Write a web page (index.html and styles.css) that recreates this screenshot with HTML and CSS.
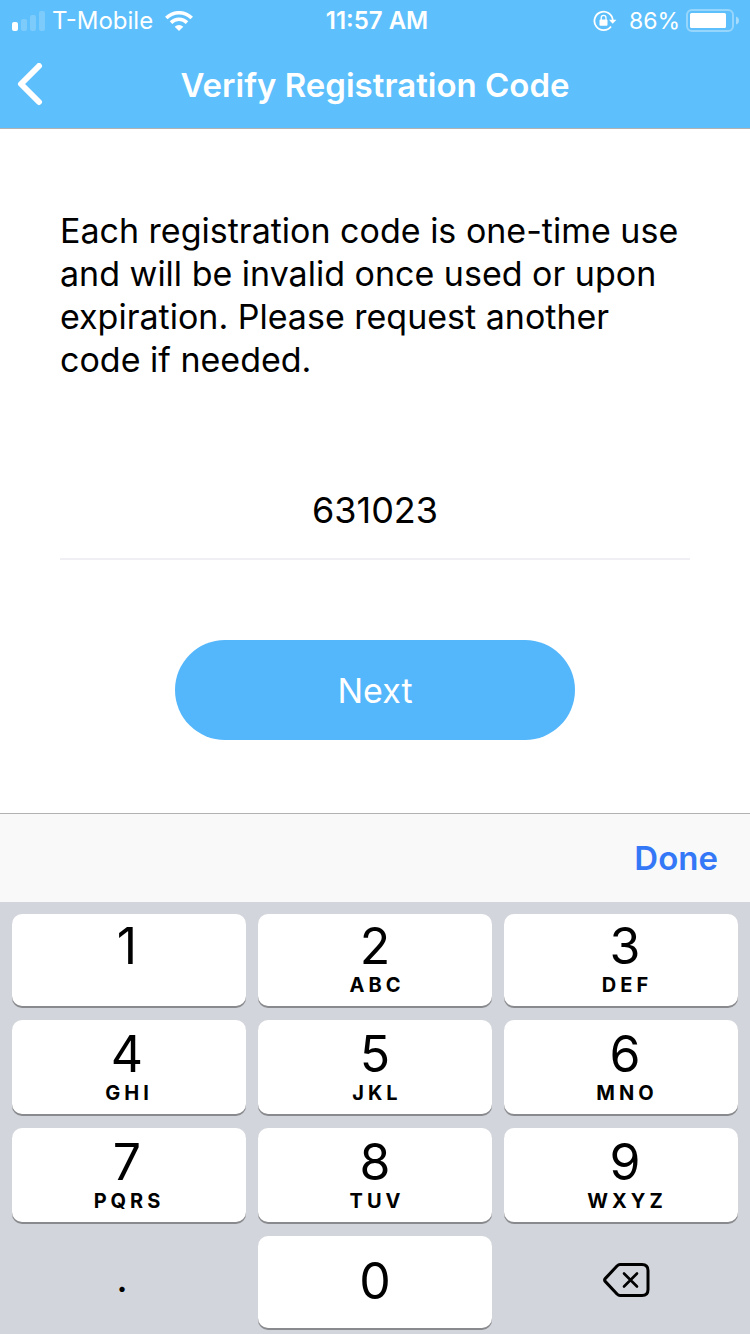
FILE: index.html
```html
<!DOCTYPE html>
<html lang="en">
<head>
<meta charset="utf-8">
<meta name="viewport" content="width=device-width, initial-scale=1">
<title>Verify Registration Code</title>
<link rel="stylesheet" href="styles.css">
</head>
<body>
<header class="header">
  <div class="status">
    <div class="status-left">
      <svg class="signal" width="34" height="20" viewBox="0 0 34 20" fill="#fff" aria-hidden="true">
        <rect x="0" y="11" width="6" height="9" rx="2"/>
        <g fill-opacity=".2">
          <rect x="9" y="8" width="6" height="12" rx="2"/>
          <rect x="18" y="4" width="6" height="16" rx="2"/>
          <rect x="27" y="0" width="6" height="20" rx="2"/>
        </g>
      </svg>
      <span>T-Mobile</span>
      <svg class="wifi" width="28" height="20" viewBox="0 0 28 20" aria-hidden="true">
        <path d="M1.300 7A18 18 0 0 1 26.700 7M6 11.600a11.400 11.400 0 0 1 16 0" fill="none" stroke="#fff" stroke-width="3.600"/>
        <path d="M14 20l-4.300-4.300a6.200 6.200 0 0 1 8.600 0z" fill="#fff"/>
      </svg>
    </div>
    <time class="clock">11:57 AM</time>
    <div class="status-right">
      <svg class="lock" width="24" height="22" viewBox="0 0 24 22" aria-hidden="true">
        <path d="M18 16.500A9.200 9.200 0 1 1 19.800 10" fill="none" stroke="#fff" stroke-width="1.800"/>
        <path d="M16 9.800h7.400L19.700 13.800z" fill="#fff"/>
        <rect x="6.500" y="9.400" width="8" height="6.400" rx="1" fill="#fff"/>
        <path d="M8.200 10V7.700a2.400 2.400 0 0 1 4.800 0V10" fill="none" stroke="#fff" stroke-width="1.300"/>
      </svg>
      <span class="percent">86%</span>
      <svg class="battery" width="54" height="24" viewBox="0 0 54 24" aria-hidden="true">
        <rect x="1" y="1" width="46" height="21" rx="5" fill="none" stroke="#fff" stroke-opacity=".36" stroke-width="2"/>
        <rect x="4" y="4" width="36" height="15" rx="1.500" fill="#fff"/>
        <path d="M50 7.500q3 1 3 4t-3 4z" fill="#fff" fill-opacity=".45"/>
      </svg>
    </div>
  </div>
  <nav class="nav">
    <button class="back" type="button" aria-label="Back">
      <svg width="26" height="44" viewBox="0 0 26 44" fill="none" stroke="#fff" stroke-width="6" stroke-linecap="round" stroke-linejoin="round" aria-hidden="true"><path d="M22 3L4 21l18 18"/></svg>
    </button>
    <h1 class="title">Verify Registration Code</h1>
  </nav>
</header>

<main class="content">
  <p class="notice">Each registration code is one-time use and will be invalid once used or upon expiration. Please request another code if needed.</p>
  <input class="code" type="text" inputmode="numeric" aria-label="Registration code" value="631023">
  <button class="next" type="button">Next</button>
</main>

<section class="keyboard" aria-label="Keypad">
  <div class="toolbar"><button class="done" type="button">Done</button></div>
  <div class="keys">
    <button class="key" type="button"><span class="digit">1</span></button>
    <button class="key" type="button"><span class="digit">2</span><span class="letters">ABC</span></button>
    <button class="key" type="button"><span class="digit">3</span><span class="letters">DEF</span></button>
    <button class="key" type="button"><span class="digit">4</span><span class="letters">GHI</span></button>
    <button class="key" type="button"><span class="digit">5</span><span class="letters">JKL</span></button>
    <button class="key" type="button"><span class="digit">6</span><span class="letters">MNO</span></button>
    <button class="key" type="button"><span class="digit">7</span><span class="letters">PQRS</span></button>
    <button class="key" type="button"><span class="digit">8</span><span class="letters">TUV</span></button>
    <button class="key" type="button"><span class="digit">9</span><span class="letters">WXYZ</span></button>
    <button class="key key-plain key-point" type="button">.</button>
    <button class="key key-zero" type="button"><span class="digit">0</span></button>
    <button class="key key-plain key-delete" type="button" aria-label="Delete">
      <svg width="48" height="36" viewBox="0 0 48 36" fill="none" stroke="#000" stroke-linecap="round" stroke-linejoin="round" aria-hidden="true">
        <path d="M18 2.500H40Q46 2.500 46 8.500V27.500Q46 33.500 40 33.500H18Q16.500 33.500 15 32L3.200 19.400Q2 18 3.200 16.600L15 4Q16.500 2.500 18 2.500Z" stroke-width="3"/>
        <path d="M22 11.500L35 24.500M35 11.500L22 24.500" stroke-width="2.600"/>
      </svg>
    </button>
  </div>
</section>
</body>
</html>
```
FILE: styles.css
```css
* {
  box-sizing: border-box;
}

body {
  margin: 0;
  min-height: 100vh;
  display: flex;
  flex-direction: column;
  background: #fff;
  color: #000;
  font-family: Inter, "Liberation Sans", sans-serif;
}

button {
  margin: 0;
  padding: 0;
  border: 0;
  background: none;
  color: inherit;
  font: inherit;
}

svg {
  display: block;
  flex: none;
}

.header {
  background: #5dbffb;
  color: #fff;
  border-bottom: 1px solid #b2b2b2;
}

.status {
  display: grid;
  grid-template-columns: 1fr auto 1fr;
  align-items: center;
  height: 41px;
  padding: 0 12px;
  font-size: 24px;
}

.status-left,
.status-right {
  display: flex;
  align-items: center;
}

.status-left {
  gap: 6px;
}

.wifi {
  margin-left: 6px;
}

.clock {
  padding-left: 4px;
  font-weight: 600;
}

.status-right {
  justify-content: flex-end;
  gap: 6px;
}

.lock {
  margin-right: 6px;
}

.percent {
  font-size: 23px;
}

.battery {
  margin-right: -2px;
}

.nav {
  display: grid;
  grid-template-columns: 60px 1fr 60px;
  align-items: center;
  height: 87px;
}

.back {
  justify-self: start;
  padding-left: 17px;
}

.title {
  margin: 0;
  text-align: center;
  font-size: 33px;
  font-weight: 600;
  line-height: 40px;
}

.content {
  flex: 1;
  display: flex;
  flex-direction: column;
  align-items: center;
  padding: 80px 60px 73px;
}

.notice {
  align-self: stretch;
  margin: 0;
  font-size: 34px;
  line-height: 43px;
}

.code {
  width: 100%;
  height: 100px;
  margin: 79px 0 80px;
  padding: 2px 0 0;
  border: 0;
  border-bottom: 2px solid #efeff4;
  border-radius: 0;
  outline: 0;
  background: none;
  color: inherit;
  font: inherit;
  font-size: 36px;
  text-align: center;
}

.next {
  width: 400px;
  max-width: 100%;
  height: 100px;
  border-radius: 50px;
  background: #54b6fb;
  color: #fff;
  font-size: 34px;
}

.toolbar {
  display: flex;
  justify-content: flex-end;
  align-items: center;
  height: 89px;
  padding: 0 32px;
  border-top: 1px solid #b2b2b2;
  background: #f9f9f9;
}

.done {
  color: #3478f7;
  font-size: 33px;
  font-weight: 600;
}

.keys {
  display: grid;
  grid-template-columns: repeat(3, 1fr);
  grid-template-rows: 92px 94px 94px 92px;
  gap: 14px 12px;
  padding: 12px 12px 6px;
  background: #d2d5db;
}

.key {
  display: flex;
  flex-direction: column;
  align-items: center;
  padding-top: 7px;
  border-radius: 10px;
  background: #fff;
  box-shadow: 0 2px 0 #898a8d;
}

.key:nth-child(n + 4) {
  padding-top: 9px;
}

.key:nth-child(3n + 1) {
  padding-right: 4px;
}

.key:nth-child(3n) {
  padding-left: 8px;
}

.digit {
  font-size: 50px;
  line-height: 50px;
}

.letters {
  padding-left: 4px;
  font-size: 20px;
  font-weight: 700;
  line-height: 28px;
  letter-spacing: 4px;
}

.key.key-zero,
.key.key-plain {
  justify-content: center;
  padding-top: 0;
  padding-bottom: 2px;
}

.key.key-plain {
  background: none;
  box-shadow: none;
}

.key.key-point {
  padding-right: 14px;
  padding-bottom: 10px;
  font-size: 40px;
}

.key.key-delete {
  padding-left: 10px;
  padding-bottom: 4px;
}
```
